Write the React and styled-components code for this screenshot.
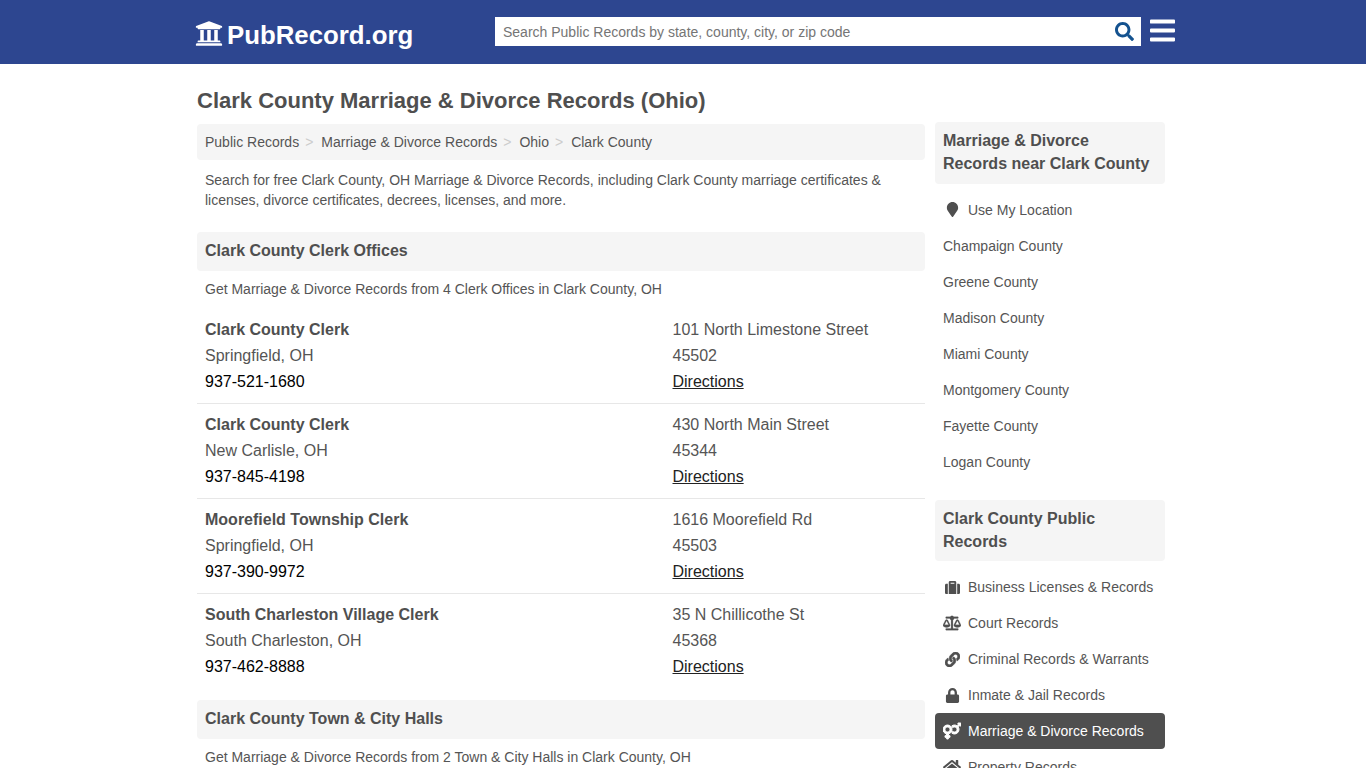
import React from "react";
import styled, { createGlobalStyle } from "styled-components";
import { FaUniversity, FaSearch, FaBars, FaMapMarker, FaSuitcase, FaBalanceScale, FaLink, FaLock, FaVenusMars, FaHome } from "react-icons/fa";

const Global = createGlobalStyle`
  html, body { margin: 0; padding: 0; background: #fff; height: 768px; overflow: hidden; }
  body { font-family: "Liberation Sans", Arial, sans-serif; color: #555; font-size: 14px; }
  * { box-sizing: border-box; }
`;

const Header = styled.header`
  height: 64px;
  background: #2d4690;
`;
const HeaderInner = styled.div`
  width: 985px;
  margin-left: 195px;
  height: 64px;
  display: flex;
  align-items: flex-start;
`;
const Logo = styled.a`
  flex: none;
  width: 300px;
  display: flex;
  align-items: center;
  color: #fff;
  font-weight: 700;
  font-size: 25.8px;
  height: 64px;
  padding-top: 6px;
  gap: 4px;
  svg { width: 28px; height: 29px; margin-top: -4px; }
`;
const SearchBox = styled.div`
  flex: none;
  margin-top: 17px;
  width: 646px;
  height: 29px;
  background: #fff;
  display: flex;
  align-items: center;
  justify-content: space-between;
  padding: 0 7px 0 8px;
  font-size: 14px;
  color: #757575;
  svg { font-size: 19px; color: #14528f; }
`;
const Burger = styled.div`
  flex: none;
  margin: 16px 0 0 9px;
  color: #fff;
  line-height: 0;
  svg { width: 25px; height: 29px; }
`;
const Page = styled.div`
  width: 968px;
  margin-left: 197px;
  display: grid;
  grid-template-columns: 728px 230px;
  column-gap: 10px;
`;
const Title = styled.h1`
  grid-column: 1 / 3;
  margin: 0;
  padding-top: 24px;
  height: 58px;
  font-size: 22px;
  line-height: 26px;
  font-weight: 700;
  color: #4f4f4f;
`;
const Main = styled.main`
  padding-top: 2px;
`;
const Crumbs = styled.div`
  height: 36px;
  background: #f5f5f5;
  border-radius: 4px;
  padding: 0 8px;
  display: flex;
  align-items: center;
  font-size: 14px;
`;
const Sep = styled.span`
  color: #ccc;
  padding: 0 8px 0 6px;
`;
const Intro = styled.p`
  margin: 10px 8px 0;
  font-size: 14px;
  line-height: 20px;
  height: 62px;
`;
const SectionHead = styled.h2`
  margin: 0;
  height: 39px;
  padding: 0 8px 2px;
  display: flex;
  align-items: center;
  background: #f5f5f5;
  border-radius: 4px;
  font-size: 16px;
  font-weight: 700;
  color: #4f4f4f;
`;
const SectionNote = styled.p`
  margin: 0;
  padding: 0 8px 3px;
  height: 38px;
  display: flex;
  align-items: center;
  font-size: 14px;
`;
const Office = styled.div`
  display: grid;
  grid-template-columns: 467.5px 1fr;
  padding: 8px 8px 5px;
  height: 95px;
  font-size: 16px;
  line-height: 26px;
  border-bottom: ${p => (p.$last ? "none" : "1px solid #e7e7e7")};
`;
const Cell = styled.div`
  display: flex;
  flex-direction: column;
`;
const Name = styled.b`
  font-weight: 700;
  color: #4f4f4f;
`;
const Phone = styled.span`
  color: #000;
`;
const Directions = styled.a`
  color: #222;
  text-decoration: underline;
`;
const Offices = styled.div`
  margin-bottom: 11px;
`;
const Side = styled.aside``;
const SideHead = styled.h3`
  margin: 0 0 8px;
  background: #f5f5f5;
  border-radius: 4px;
  padding: 7px 8px 8.5px;
  font-size: 16px;
  line-height: 23px;
  font-weight: 700;
  color: #4f4f4f;
`;
const SideList = styled.div`
  margin-bottom: 20px;
  display: flex;
  flex-direction: column;
`;
const SideItem = styled.a`
  height: 36px;
  flex: none;
  display: flex;
  align-items: center;
  padding: 0 8px;
  font-size: 14px;
  border-radius: 4px;
  color: ${p => (p.$active ? "#fff" : "#555")};
  background: ${p => (p.$active ? "#4f4f4f" : "transparent")};
`;
const IconBox = styled.span`
  width: 25px;
  flex: none;
  display: flex;
  justify-content: center;
  padding-right: 7px;
  color: ${p => (p.$active ? "#fff" : "#4f4f4f")};
  font-size: ${p => p.$size || 15}px;
  svg { stroke: currentColor; stroke-width: ${p => p.$bold || 0}; }
`;

const offices = [
  ["Clark County Clerk", "Springfield, OH", "937-521-1680", "101 North Limestone Street", "45502"],
  ["Clark County Clerk", "New Carlisle, OH", "937-845-4198", "430 North Main Street", "45344"],
  ["Moorefield Township Clerk", "Springfield, OH", "937-390-9972", "1616 Moorefield Rd", "45503"],
  ["South Charleston Village Clerk", "South Charleston, OH", "937-462-8888", "35 N Chillicothe St", "45368"],
];
const crumbs = ["Public Records", "Marriage & Divorce Records", "Ohio", "Clark County"];
const near = ["Champaign County", "Greene County", "Madison County", "Miami County", "Montgomery County", "Fayette County", "Logan County"];
const records = [
  { I: FaSuitcase, t: "Business Licenses & Records", s: 15 },
  { I: FaBalanceScale, t: "Court Records", s: 18, b: 8 },
  { I: FaLink, t: "Criminal Records & Warrants", s: 15, b: 20 },
  { I: FaLock, t: "Inmate & Jail Records", s: 15 },
  { I: FaVenusMars, t: "Marriage & Divorce Records", s: 18, b: 32, a: true },
  { I: FaHome, t: "Property Records", s: 18 },
];

export default function App() {
  return (
    <>
      <Global />
      <Header>
        <HeaderInner>
          <Logo><FaUniversity />PubRecord.org</Logo>
          <SearchBox>
            <span>Search Public Records by state, county, city, or zip code</span>
            <FaSearch />
          </SearchBox>
          <Burger><FaBars /></Burger>
        </HeaderInner>
      </Header>
      <Page>
        <Title>Clark County Marriage &amp; Divorce Records (Ohio)</Title>
        <Main>
          <Crumbs>
            {crumbs.map((c, i) => (
              <React.Fragment key={c}>
                <span>{c}</span>
                {i < crumbs.length - 1 && <Sep>&gt;</Sep>}
              </React.Fragment>
            ))}
          </Crumbs>
          <Intro>Search for free Clark County, OH Marriage &amp; Divorce Records, including Clark County marriage certificates &amp; licenses, divorce certificates, decrees, licenses, and more.</Intro>
          <SectionHead>Clark County Clerk Offices</SectionHead>
          <SectionNote>Get Marriage &amp; Divorce Records from 4 Clerk Offices in Clark County, OH</SectionNote>
          <Offices>
            {offices.map((o, i) => (
              <Office key={o[2]} $last={i === offices.length - 1}>
                <Cell>
                  <Name>{o[0]}</Name>
                  <span>{o[1]}</span>
                  <Phone>{o[2]}</Phone>
                </Cell>
                <Cell>
                  <span>{o[3]}</span>
                  <span>{o[4]}</span>
                  <span><Directions>Directions</Directions></span>
                </Cell>
              </Office>
            ))}
          </Offices>
          <SectionHead>Clark County Town &amp; City Halls</SectionHead>
          <SectionNote>Get Marriage &amp; Divorce Records from 2 Town &amp; City Halls in Clark County, OH</SectionNote>
        </Main>
        <Side>
          <SideHead>Marriage &amp; Divorce Records near Clark County</SideHead>
          <SideList>
            <SideItem><IconBox><FaMapMarker /></IconBox>Use My Location</SideItem>
            {near.map(n => <SideItem key={n}>{n}</SideItem>)}
          </SideList>
          <SideHead>Clark County Public Records</SideHead>
          <SideList>
            {records.map(({ I, t, s, b, a }) => (
              <SideItem key={t} $active={a}><IconBox $size={s} $bold={b} $active={a}><I /></IconBox>{t}</SideItem>
            ))}
          </SideList>
        </Side>
      </Page>
    </>
  );
}
